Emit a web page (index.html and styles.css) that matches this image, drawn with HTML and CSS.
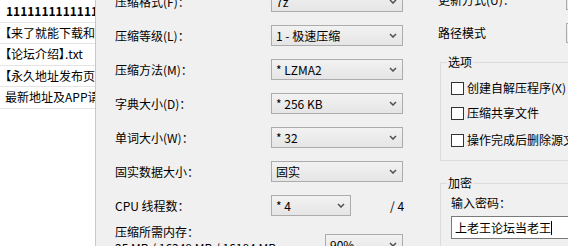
FILE: index.html
```html
<!DOCTYPE html>
<html lang="zh-CN">
<head>
<meta charset="utf-8">
<title>添加到压缩包</title>
<link rel="stylesheet" href="styles.css">
</head>
<body>
<div class="window">
  <div class="filelist">
    <div class="file file-bold">1111111111111</div>
    <div class="file">【来了就能下载和</div>
    <div class="file">【论坛介绍】.txt</div>
    <div class="file">【永久地址发布页</div>
    <div class="file">最新地址及APP请</div>
  </div>

  <div class="dialog">
    <div class="params">
      <div class="param">
        <span class="label">压缩格式(F)：</span>
        <div class="combo"><span class="combo-text">7z</span><svg class="chev" viewBox="0 0 8 5"><path d="M1 1 L4 4 L7 1"/></svg></div>
      </div>
      <div class="param">
        <span class="label">压缩等级(L)：</span>
        <div class="combo"><span class="combo-text">1 - 极速压缩</span><svg class="chev" viewBox="0 0 8 5"><path d="M1 1 L4 4 L7 1"/></svg></div>
      </div>
      <div class="param">
        <span class="label">压缩方法(M)：</span>
        <div class="combo"><span class="combo-text">* LZMA2</span><svg class="chev" viewBox="0 0 8 5"><path d="M1 1 L4 4 L7 1"/></svg></div>
      </div>
      <div class="param">
        <span class="label">字典大小(D)：</span>
        <div class="combo"><span class="combo-text">* 256 KB</span><svg class="chev" viewBox="0 0 8 5"><path d="M1 1 L4 4 L7 1"/></svg></div>
      </div>
      <div class="param">
        <span class="label">单词大小(W)：</span>
        <div class="combo"><span class="combo-text">* 32</span><svg class="chev" viewBox="0 0 8 5"><path d="M1 1 L4 4 L7 1"/></svg></div>
      </div>
      <div class="param">
        <span class="label">固实数据大小：</span>
        <div class="combo"><span class="combo-text">固实</span><svg class="chev" viewBox="0 0 8 5"><path d="M1 1 L4 4 L7 1"/></svg></div>
      </div>
      <div class="param">
        <span class="label">CPU 线程数：</span>
        <div class="threads">
          <div class="combo combo-small"><span class="combo-text">* 4</span><svg class="chev" viewBox="0 0 8 5"><path d="M1 1 L4 4 L7 1"/></svg></div>
          <span class="thread-max">/ 4</span>
        </div>
      </div>
      <div class="memory">
        <div class="mem-text">
          <div class="label">压缩所需内存：</div>
          <div class="label">25 MB / 16348 MB / 16184 MB</div>
        </div>
        <div class="combo combo-mem"><span class="combo-text">90%</span><svg class="chev" viewBox="0 0 8 5"><path d="M1 1 L4 4 L7 1"/></svg></div>
      </div>
    </div>

    <div class="side">
      <div class="side-row">
        <span class="side-label">更新方式(U)：</span>
        <div class="combo side-combo"></div>
      </div>
      <div class="side-row side-row-last">
        <span class="side-label">路径模式</span>
        <div class="combo side-combo"></div>
      </div>

      <div class="group group-options">
        <span class="group-title">选项</span>
        <label class="check check-1"><span class="box"></span><span>创建自解压程序(X)</span></label>
        <label class="check check-2"><span class="box"></span><span>压缩共享文件</span></label>
        <label class="check check-3"><span class="box"></span><span>操作完成后删除源文件</span></label>
      </div>

      <div class="group group-crypt">
        <span class="group-title">加密</span>
        <div class="pw-label">输入密码：</div>
        <div class="pw-input"><span>上老王论坛当老王</span><span class="caret"></span></div>
      </div>
    </div>
  </div>
</div>
</body>
</html>
```

FILE: styles.css
```css
html, body {
  margin: 0;
  padding: 0;
}

body {
  width: 568px;
  height: 246px;
  overflow: hidden;
  background: #f0f0f0;
  font-family: "Noto Sans CJK SC", "Noto Sans", sans-serif;
  font-size: 12px;
  color: #000;
}

.window {
  display: flex;
  height: 246px;
  overflow: hidden;
}

/* file list */
.filelist {
  width: 95px;
  flex: none;
  background: #fff;
  border-right: 1px solid #c9c9c9;
  overflow: hidden;
  white-space: nowrap;
  padding-top: 1px;
  box-sizing: content-box;
}

.file {
  height: 21.5px;
  box-sizing: border-box;
  border-bottom: 1px solid #e4e4e4;
  line-height: 20px;
  padding-left: 5px;
  font-feature-settings: "palt";
  overflow: hidden;
}

.file-bold {
  font-weight: 700;
  padding-left: 6px;
}

/* dialog */
.dialog {
  flex: 1;
  display: flex;
  gap: 35px;
  padding-left: 19px;
  overflow: hidden;
}

.params {
  width: 288px;
  flex: none;
  display: flex;
  flex-direction: column;
  gap: 13px;
  margin-top: -9px;
}

.param {
  display: grid;
  grid-template-columns: 156px 132px;
  align-items: center;
  height: 21px;
}

.label {
  line-height: 16px;
  white-space: nowrap;
}

.combo {
  box-sizing: border-box;
  height: 21px;
  border: 1px solid #acacac;
  background: linear-gradient(#f2f2f2, #e5e5e5);
  display: flex;
  align-items: center;
  padding-left: 4px;
  white-space: nowrap;
  line-height: 16px;
}

.combo-text {
  flex: 1;
}

.chev {
  width: 8px;
  height: 5px;
  margin-right: 5px;
  flex: none;
}

.chev path {
  fill: none;
  stroke: #505050;
  stroke-width: 1.5;
}

.threads {
  display: flex;
  align-items: center;
  white-space: nowrap;
}

.combo-small {
  width: 80px;
  flex: none;
}

.thread-max {
  margin-left: 39px;
  line-height: 16px;
  white-space: nowrap;
  flex: none;
}

.memory {
  display: flex;
  margin-top: -5px;
}

.mem-text {
  width: 210px;
  flex: none;
}

.combo-mem {
  width: 78px;
  margin-top: 10px;
}

/* right side */
.side {
  width: 200px;
  flex: none;
  margin-top: -10px;
}

.side-row {
  display: flex;
  align-items: center;
  height: 20px;
  margin-bottom: 13px;
  white-space: nowrap;
}

.side-row-last {
  margin-bottom: 0;
}

.side-label {
  width: 128px;
  flex: none;
  line-height: 16px;
}

.side-combo {
  width: 80px;
  height: 20px;
  flex: none;
}

.group {
  position: relative;
  margin-left: 2px;
  border: 1px solid #dcdcdc;
  border-right: none;
  box-sizing: border-box;
  width: 200px;
  padding-left: 10px;
}

.group-title {
  position: absolute;
  top: -9px;
  left: 6px;
  padding: 0 1px;
  background: #f0f0f0;
  line-height: 16px;
}

.group-options {
  margin-top: 19px;
  height: 99px;
  padding-top: 17px;
}

.check {
  display: flex;
  align-items: center;
  height: 16px;
  gap: 3px;
  white-space: nowrap;
  line-height: 16px;
}

.check-2 {
  margin-top: 9px;
}

.check-3 {
  margin-top: 11px;
}

.box {
  width: 13px;
  height: 13px;
  box-sizing: border-box;
  border: 1px solid #333;
  background: #fff;
  flex: none;
}

.group-crypt {
  margin-top: 22px;
  height: 80px;
  border-bottom: none;
  padding-top: 11px;
}

.pw-label {
  line-height: 16px;
}

.pw-input {
  margin-top: 5px;
  height: 23px;
  box-sizing: border-box;
  border: 1px solid #7a7a7a;
  border-right: none;
  background: #fff;
  display: flex;
  align-items: center;
  padding-left: 3px;
  white-space: nowrap;
  line-height: 16px;
}

.caret {
  width: 1px;
  height: 14px;
  background: #000;
  flex: none;
}
```
